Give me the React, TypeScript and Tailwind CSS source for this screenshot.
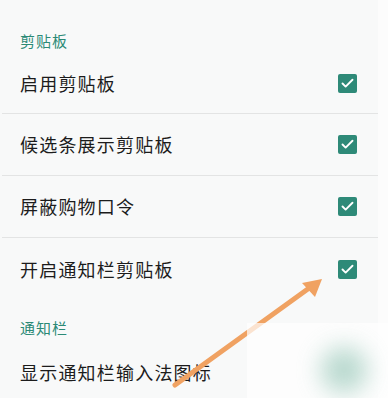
import { Check } from 'lucide-react'

const font = { fontFamily: '"Noto Sans CJK SC", "Noto Sans", sans-serif' }

function SectionTitle({ title, className }: { title: string; className: string }) {
  return (
    <div className={`flex items-center px-[18px] text-[15px] tracking-[1px] text-[#2b8a76] ${className}`}>
      {title}
    </div>
  )
}

function CheckRow({ label, className }: { label: string; className: string }) {
  return (
    <div className={`flex items-center justify-between pl-[18px] pr-[21px] ${className}`}>
      <span className="text-[18px] tracking-[1.2px] text-[#1c1c1c]">{label}</span>
      <span className="flex h-[19px] w-[19px] items-center justify-center rounded-[2px] bg-[#2e8a78]">
        <Check size={15} strokeWidth={3} className="text-white" />
      </span>
    </div>
  )
}

export default function App() {
  return (
    <div className="relative h-[398px] w-[388px] overflow-hidden bg-[#fcfcfc]" style={font}>
      <div className="h-full w-[378px] bg-[#f8f9f9] pl-[2px]">
        <div className="h-[28px]" />
        <SectionTitle title="剪贴板" className="h-[26px]" />
        <CheckRow label="启用剪贴板" className="h-[59px]" />
        <div className="h-px bg-[#e3e4e4]" />
        <CheckRow label="候选条展示剪贴板" className="h-[61px]" />
        <div className="h-px bg-[#e3e4e4]" />
        <CheckRow label="屏蔽购物口令" className="h-[61px]" />
        <div className="h-px bg-[#e3e4e4]" />
        <CheckRow label="开启通知栏剪贴板" className="h-[62px]" />
        <SectionTitle title="通知栏" className="mt-[14px] h-[28px]" />
        <div className="flex h-[60px] items-center px-[18px] text-[18px] tracking-[1.2px] text-[#1c1c1c]">
          显示通知栏输入法图标
        </div>
      </div>

      <svg className="absolute left-0 top-0" width="388" height="398" viewBox="0 0 388 398">
        <line x1="175" y1="385" x2="312" y2="286" stroke="#f0a262" strokeWidth="5" strokeLinecap="round" />
        <polygon points="322,279 302,283 315,297" fill="#f0a262" />
      </svg>

      <div className="absolute left-[247px] top-[323px] h-[75px] w-[141px] bg-white/70">
        <div className="absolute left-[74px] top-[24px] h-[46px] w-[46px] rounded-full bg-[#a6cfc2] blur-[12px] opacity-80" />
      </div>
    </div>
  )
}
